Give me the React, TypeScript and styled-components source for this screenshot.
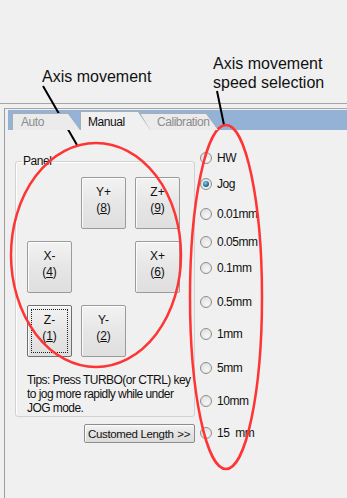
import React from "react";
import styled, { createGlobalStyle, css } from "styled-components";

const Global = createGlobalStyle`
  html, body { margin: 0; padding: 0; background: #f0f0f0; }
  * { box-sizing: border-box; }
`;

const Page = styled.div`
  position: relative;
  width: 347px;
  height: 498px;
  overflow: hidden;
  background: #f0f0f0;
  font-family: "Liberation Sans", Arial, sans-serif;
  color: #111;
`;

const TopSpace = styled.div`
  height: 104px;
  border-bottom: 1px solid #a6a6a6;
  margin-bottom: 4px;
`;

const Frame = styled.div`
  margin-left: 4px;
  height: 390px;
  border-left: 1px solid #9c9c9c;
  border-top: 1px solid #a6a6a6;
  display: flex;
  flex-direction: column;
  font-size: 12px;
  letter-spacing: -0.45px;
`;

const TabStrip = styled.div`
  margin: 1px 0 0 3px;
  height: 20px;
  background: #94b2d5;
  display: flex;
  align-items: flex-end;
  padding-left: 4px;
`;

const TabOuter = styled.div<{ $w: number; $active?: boolean; $z: number; $ml: number }>`
  position: relative;
  z-index: ${(p) => p.$z};
  width: ${(p) => p.$w}px;
  height: ${(p) => (p.$active ? 19 : 17)}px;
  margin-left: ${(p) => p.$ml}px;
  background: #a9aeb6;
  clip-path: polygon(0 0, calc(100% - 11px) 0, 100% 100%, 0 100%);
  padding: 1px 0 0 1px;
  display: flex;
`;

const TabInner = styled.div<{ $active?: boolean; $pl: number }>`
  flex: 1;
  background: ${(p) => (p.$active ? "#f0f0f0" : "#ebebeb")};
  clip-path: polygon(0 0, calc(100% - 12px) 0, 100% 100%, 0 100%);
  line-height: 16px;
  white-space: nowrap;
  color: ${(p) => (p.$active ? "#111" : "#8c8c8c")};
  padding-left: ${(p) => p.$pl}px;
  padding-top: ${(p) => (p.$active ? 2 : 0)}px;
`;

const Content = styled.div`
  display: flex;
  flex: 1;
`;

const LeftColumn = styled.div`
  margin-left: 10px;
  width: 180px;
  display: flex;
  flex-direction: column;
  align-items: flex-end;
`;

const GroupBox = styled.fieldset`
  width: 180px;
  margin: 24px 0 0 0;
  padding: 0;
  border: 1px solid #d2d2d2;
  border-radius: 3px;
  box-shadow: inset 1px 1px 0 #fff;
`;

const Legend = styled.legend`
  margin-left: 6px;
  padding: 0 1px;
  line-height: 14px;
  color: #111;
`;

const GroupBody = styled.div`
  padding: 9px 0 1px 11px;
`;

const Pad = styled.div`
  display: grid;
  grid-template-columns: repeat(3, 45px);
  grid-template-rows: repeat(3, 52px);
  column-gap: 9px;
  row-gap: 12px;
`;

const JogButton = styled.div<{ $focused?: boolean; $col: number; $row: number }>`
  grid-column: ${(p) => p.$col};
  grid-row: ${(p) => p.$row};
  position: relative;
  display: flex;
  flex-direction: column;
  align-items: center;
  justify-content: center;
  padding-bottom: 6px;
  border: 1px solid ${(p) => (p.$focused ? "#6f6f6f" : "#9b9b9b")};
  border-radius: 2px;
  background: linear-gradient(#f3f3f3, #e6e6e6 50%, #dfdfdf);
  box-shadow: inset 1px 1px 0 #fcfcfc;
  line-height: 16px;
  letter-spacing: 0;
  color: #111;
  ${(p) =>
    p.$focused &&
    css`
      &::after {
        content: "";
        position: absolute;
        inset: 3px;
        border: 1px dotted #222;
      }
    `}
`;

const Key = styled.span`
  text-decoration: underline;
`;

const Tips = styled.p`
  margin: 16px 0 0 0;
  line-height: 14px;
  letter-spacing: -0.55px;
  white-space: nowrap;
  color: #111;
`;

const WideButton = styled.div`
  margin-top: 7px;
  width: 111px;
  height: 19px;
  display: flex;
  justify-content: space-between;
  align-items: center;
  white-space: nowrap;
  padding: 0 4px 0 3px;
  border: 1px solid #8c8c8c;
  border-radius: 2px;
  background: linear-gradient(#f3f3f3, #e4e4e4 50%, #dcdcdc);
  box-shadow: inset 1px 1px 0 #fcfcfc;
  font-size: 11.5px;
  letter-spacing: -0.35px;
  color: #111;
`;

const RadioColumn = styled.div`
  margin-left: 5px;
  display: flex;
  flex-direction: column;
`;

const RadioRow = styled.div<{ $mt: number }>`
  margin-top: ${(p) => p.$mt}px;
  height: 14px;
  display: flex;
  align-items: center;
  gap: 5px;
  white-space: pre;
  color: #111;
`;

const RadioCircle = styled.span<{ $checked?: boolean }>`
  position: relative;
  flex: none;
  width: 12px;
  height: 12px;
  border-radius: 50%;
  border: 1px solid #8d8d8d;
  background: radial-gradient(circle at 60% 65%, #f6f6f6, #dadada);
  ${(p) =>
    p.$checked &&
    css`
      &::after {
        content: "";
        position: absolute;
        left: 2px;
        top: 2px;
        width: 6px;
        height: 6px;
        border-radius: 50%;
        background: radial-gradient(circle at 40% 35%, #7fd0e8, #1c6f8f 60%, #0f4a66);
      }
    `}
`;

const Overlay = styled.div`
  position: absolute;
  inset: 0;
  pointer-events: none;
`;

const Annotation = styled.div<{ $x: number; $y: number }>`
  position: absolute;
  left: ${(p) => p.$x}px;
  top: ${(p) => p.$y}px;
  font-size: 16px;
  line-height: 19px;
  color: #111;
  white-space: nowrap;
`;

const Marks = styled.svg`
  position: absolute;
  left: 0;
  top: 0;
`;

const tabs = [
  { label: "Auto", w: 68, ml: 0, z: 2, pl: 8 },
  { label: "Manual", w: 70, ml: 0, z: 3, active: true, pl: 7 },
  { label: "Calibration", w: 78, ml: -10, z: 1, pl: 16 },
];

const buttons = [
  { a: "Y+", k: "8", col: 2, row: 1 },
  { a: "Z+", k: "9", col: 3, row: 1 },
  { a: "X-", k: "4", col: 1, row: 2 },
  { a: "X+", k: "6", col: 3, row: 2 },
  { a: "Z-", k: "1", col: 1, row: 3, focused: true },
  { a: "Y-", k: "2", col: 2, row: 3 },
];

const radios = [
  { label: "HW", mt: 21 },
  { label: "Jog", mt: 12, checked: true },
  { label: "0.01mm", mt: 16 },
  { label: "0.05mm", mt: 14 },
  { label: "0.1mm", mt: 12 },
  { label: "0.5mm", mt: 20 },
  { label: "1mm", mt: 18 },
  { label: "5mm", mt: 20 },
  { label: "10mm", mt: 19 },
  { label: "15  mm", mt: 18 },
];

export default function App() {
  return (
    <Page>
      <Global />
      <TopSpace />
      <Frame>
        <TabStrip>
          {tabs.map((t) => (
            <TabOuter key={t.label} $w={t.w} $active={t.active} $z={t.z} $ml={t.ml}>
              <TabInner $active={t.active} $pl={t.pl}>
                {t.label}
              </TabInner>
            </TabOuter>
          ))}
        </TabStrip>
        <Content>
          <LeftColumn>
            <GroupBox>
              <Legend>Panel</Legend>
              <GroupBody>
                <Pad>
                  {buttons.map((b) => (
                    <JogButton key={b.a} $col={b.col} $row={b.row} $focused={b.focused}>
                      <span>{b.a}</span>
                      <span>
                        (<Key>{b.k}</Key>)
                      </span>
                    </JogButton>
                  ))}
                </Pad>
                <Tips>
                  Tips: Press TURBO(or CTRL) key
                  <br />
                  to jog more rapidly while under
                  <br />
                  JOG mode.
                </Tips>
              </GroupBody>
            </GroupBox>
            <WideButton>
              <span>Customed Length</span>
              <span>&gt;&gt;</span>
            </WideButton>
          </LeftColumn>
          <RadioColumn>
            {radios.map((r) => (
              <RadioRow key={r.label} $mt={r.mt}>
                <RadioCircle $checked={r.checked} />
                <span>{r.label}</span>
              </RadioRow>
            ))}
          </RadioColumn>
        </Content>
      </Frame>
      <Overlay>
        <Annotation $x={42} $y={67}>Axis movement</Annotation>
        <Annotation $x={213} $y={54}>
          Axis movement
          <br />
          speed selection
        </Annotation>
        <Marks width={347} height={498} viewBox="0 0 347 498">
          <line x1={43} y1={86} x2={77} y2={145} stroke="#000" strokeWidth={2} />
          <line x1={217} y1={91} x2={224} y2={125} stroke="#000" strokeWidth={2} />
          <ellipse cx={96} cy={255} rx={85} ry={112} fill="none" stroke="#ff3434" strokeWidth={2.5} />
          <ellipse cx={226} cy={297} rx={36} ry={172} fill="none" stroke="#ff3434" strokeWidth={2.5} />
        </Marks>
      </Overlay>
    </Page>
  );
}
